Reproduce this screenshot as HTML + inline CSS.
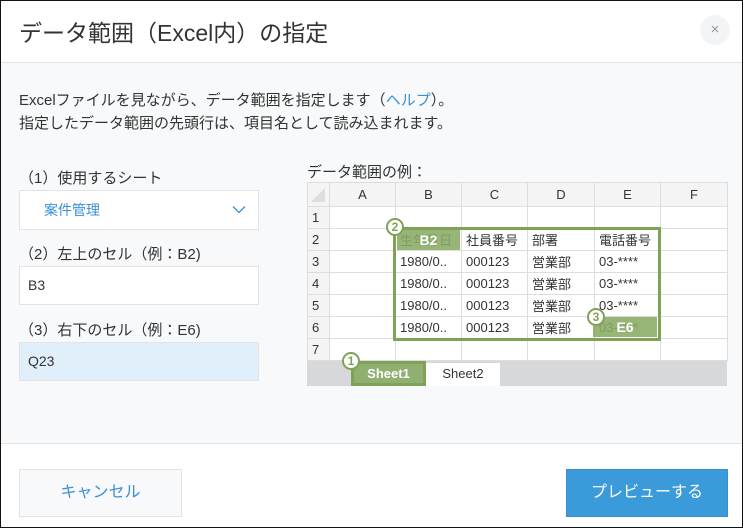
<!DOCTYPE html>
<html><head><meta charset="utf-8"><style>
*{box-sizing:border-box;margin:0;padding:0}
body{width:743px;height:528px;overflow:hidden;font-family:"Liberation Sans","Noto Sans CJK JP",sans-serif;color:#333;background:#fff;position:relative}
.edge{position:absolute;left:0;top:0;width:743px;height:528px;border:1px solid #111;z-index:10}
.abs{position:absolute}
.hdr{left:0;top:0;width:743px;height:63px;border-bottom:1px solid #e3e3e3;background:#fff}
.title{left:19px;top:14px;font-size:23px;color:#333;white-space:nowrap}
.close{left:700px;top:15px;width:30px;height:30px;border-radius:50%;background:#f3f4f6;color:#999;font-size:15px;text-align:center;line-height:29px}
.body{left:0;top:63px;width:743px;height:381px;background:#f7f9fa;border-bottom:1px solid #e3e3e3}
.desc{left:19px;top:89px;font-size:15px;line-height:23px;color:#333;white-space:nowrap}
.lbl{font-size:15px;color:#333;white-space:nowrap}
.box{left:19px;width:240px;border:1px solid #e3e3e3;background:#fff;font-size:14px;padding-left:8px}
table{border-collapse:collapse;position:absolute;left:307px;top:182px;table-layout:fixed;background:#fff}
td{border:1px solid #ddd;height:22px;font-size:13px;padding:0 4px;white-space:nowrap;overflow:hidden;color:#333}
tr.h td{background:#f4f4f4;text-align:center;height:24px;font-size:13px}
td.rn{background:#f4f4f4;padding-left:4px;font-size:13px}
.badge{width:18px;height:18px;border-radius:50%;background:#fff;border:2px solid #7ea356;color:#7ea356;font-size:12px;font-weight:bold;text-align:center;line-height:14px}
.btn{top:469px;height:48px;font-size:16px;text-align:center;line-height:46px}
</style></head><body>
<div class="abs hdr"></div>
<div class="abs title">データ範囲（Excel内）の指定</div>
<div class="abs close">×</div>
<div class="abs body"></div>
<div class="abs desc">Excelファイルを見ながら、データ範囲を指定します（<span style="color:#3b8fd8">ヘルプ</span>）。<br>指定したデータ範囲の先頭行は、項目名として読み込まれます。</div>

<div class="abs lbl" style="left:19px;top:167px">（1）使用するシート</div>
<div class="abs box" style="top:190px;height:40px;line-height:38px;padding-left:24px;color:#3b8fd8">案件管理
<svg class="abs" style="left:212px;top:14px" width="14" height="9" viewBox="0 0 14 9"><path d="M1 1.5 7 7.5 13 1.5" fill="none" stroke="#3b8fd8" stroke-width="1.3"/></svg></div>
<div class="abs lbl" style="left:19px;top:243px">（2）左上のセル（例：B2)</div>
<div class="abs box" style="top:266px;height:39px;line-height:37px">B3</div>
<div class="abs lbl" style="left:19px;top:319px">（3）右下のセル（例：E6)</div>
<div class="abs box" style="top:342px;height:39px;line-height:37px;background:#e1effb">Q23</div>

<div class="abs lbl" style="left:307px;top:161px">データ範囲の例：</div>
<table>
<colgroup><col style="width:21px"><col style="width:66px"><col style="width:66px"><col style="width:66px"><col style="width:67px"><col style="width:66px"><col style="width:67px"></colgroup>
<tr class="h"><td style="background:#f4f4f4"><svg width="14" height="14" style="display:block;margin-left:-1px"><path d="M14 0V14H0Z" fill="#ddd"/></svg></td><td>A</td><td>B</td><td>C</td><td>D</td><td>E</td><td>F</td></tr>
<tr><td class="rn">1</td><td></td><td></td><td></td><td></td><td></td><td></td></tr>
<tr><td class="rn">2</td><td></td><td style="color:#888">生年月日</td><td>社員番号</td><td>部署</td><td>電話番号</td><td></td></tr>
<tr><td class="rn">3</td><td></td><td>1980/0..</td><td>000123</td><td>営業部</td><td>03-****</td><td></td></tr>
<tr><td class="rn">4</td><td></td><td>1980/0..</td><td>000123</td><td>営業部</td><td>03-****</td><td></td></tr>
<tr><td class="rn">5</td><td></td><td>1980/0..</td><td>000123</td><td>営業部</td><td>03-****</td><td></td></tr>
<tr><td class="rn">6</td><td></td><td>1980/0..</td><td>000123</td><td>営業部</td><td style="color:#888">03-****</td><td></td></tr>
<tr><td class="rn">7</td><td></td><td></td><td></td><td></td><td></td><td></td></tr>
</table>
<div class="abs" style="left:397px;top:230px;width:63px;height:20px;background:rgba(126,163,86,.8);color:#fff;font-weight:bold;font-size:14px;text-align:center;line-height:20px">B2</div>
<div class="abs" style="left:593px;top:317px;width:64px;height:20px;background:rgba(126,163,86,.8);color:#fff;font-weight:bold;font-size:14px;text-align:center;line-height:20px">E6</div>
<div class="abs" style="left:393px;top:227px;width:268px;height:114px;border:3px solid #7ea356"></div>
<div class="abs" style="left:307px;top:361px;width:420px;height:25px;background:#d6d8da"></div>
<div class="abs" style="left:351px;top:361px;width:75px;height:25px;background:#8fb070;border:3px solid #7ea356;color:#fff;font-weight:bold;font-size:13px;text-align:center;line-height:19px">Sheet1</div>
<div class="abs" style="left:426px;top:363px;width:74px;height:23px;background:#fff;font-size:13px;text-align:center;line-height:22px">Sheet2</div>
<div class="abs badge" style="left:386px;top:218px">2</div>
<div class="abs badge" style="left:587px;top:308px">3</div>
<div class="abs badge" style="left:342px;top:352px">1</div>

<div class="abs btn" style="left:19px;width:163px;background:#f7f9fa;border:1px solid #e3e3e3;color:#3b8fd8">キャンセル</div>
<div class="abs btn" style="left:566px;width:162px;background:#3b9ad9;border:1px solid #3590cf;color:#fff">プレビューする</div>
<div class="edge"></div>
</body></html>
